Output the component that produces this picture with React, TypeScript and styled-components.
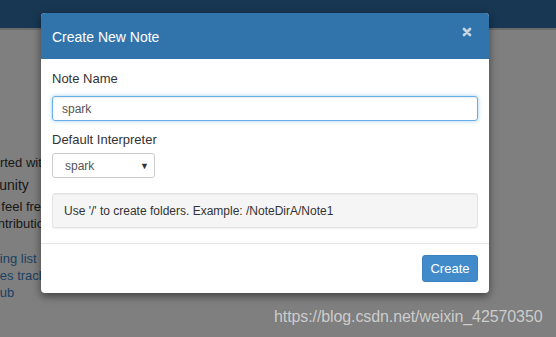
import React from 'react'
import styled, { createGlobalStyle } from 'styled-components'

const GlobalStyle = createGlobalStyle`
  html, body {
    margin: 0;
    padding: 0;
    height: 100%;
  }
  body {
    font-family: 'Liberation Sans', Arial, sans-serif;
    font-size: 13px;
    color: #333;
    background: #fff;
    overflow: hidden;
  }
`

const Page = styled.div`
  position: relative;
  width: 556px;
  height: 337px;
  overflow: hidden;
  background: #fff;
`

const NavBar = styled.div`
  height: 28px;
  background: #306ea6;
  border-bottom: 2px solid #d4d4d4;
`

const Content = styled.div`
  display: flex;
  flex-direction: column;
  margin-left: -42px;
  padding-top: 124px;
  width: 300px;
`

const Line = styled.div<{ gap?: number }>`
  font-size: 13px;
  line-height: 17px;
  color: #333;
  margin-top: ${(p) => p.gap ?? 0}px;
  white-space: nowrap;
`

const Heading = styled.div`
  font-size: 14px;
  line-height: 20px;
  color: #333;
  margin-top: 4px;
`

const LinkList = styled.div`
  display: flex;
  flex-direction: column;
  padding-left: 18px;
  margin-top: 18px;
`

const Link = styled.div`
  font-size: 13px;
  line-height: 17px;
  color: #3d7fc4;
  white-space: nowrap;
`

const Backdrop = styled.div`
  position: absolute;
  inset: 0;
  background: rgba(0, 0, 0, 0.5);
`

const Modal = styled.div`
  position: absolute;
  top: 13px;
  left: 41px;
  width: 448px;
  background: #fff;
  border-radius: 4px;
  overflow: hidden;
  box-shadow: 0 3px 9px rgba(0, 0, 0, 0.5);
`

const Header = styled.div`
  display: flex;
  align-items: center;
  justify-content: space-between;
  height: 46px;
  padding: 0 17px 0 11px;
  background: #3174ab;
`

const Title = styled.h4`
  margin: 0;
  font-size: 14px;
  font-weight: normal;
  color: #fff;
  padding-top: 2px;
`

const Close = styled.span`
  display: flex;
  margin-top: -8px;
  opacity: 0.85;
`

const Body = styled.div`
  padding: 12px 11px 15px 11px;
  border-bottom: 1px solid #e5e5e5;
`

const Label = styled.div<{ space: number }>`
  font-size: 13px;
  line-height: 15px;
  color: #333;
  margin-bottom: ${(p) => p.space}px;
`

const Group = styled.div`
  margin-bottom: 11px;
`

const Input = styled.div`
  box-sizing: border-box;
  height: 25px;
  padding: 0 9px;
  display: flex;
  align-items: center;
  border: 1px solid #66afe9;
  border-radius: 3px;
  box-shadow: inset 0 1px 1px rgba(0, 0, 0, 0.075), 0 0 4px rgba(102, 175, 233, 0.6);
  font-size: 12px;
  color: #555;
`

const Select = styled.div`
  box-sizing: border-box;
  width: 103px;
  height: 25px;
  padding: 0 5px 0 12px;
  display: flex;
  align-items: center;
  justify-content: space-between;
  border: 1px solid #ccc;
  border-radius: 3px;
  font-size: 12px;
  color: #555;
`

const Arrow = styled.span`
  font-size: 9px;
  color: #333;
`

const Well = styled.div`
  box-sizing: border-box;
  height: 35px;
  margin-top: 15px;
  padding: 0 11px;
  display: flex;
  align-items: center;
  background: #f5f5f5;
  border: 1px solid #e3e3e3;
  border-radius: 3px;
  box-shadow: inset 0 1px 1px rgba(0, 0, 0, 0.05), 0 1px 1px rgba(0, 0, 0, 0.06);
  font-size: 12px;
  color: #333;
`

const Footer = styled.div`
  display: flex;
  justify-content: flex-end;
  padding: 11px 11px 11px;
`

const Button = styled.button`
  box-sizing: border-box;
  height: 27px;
  width: 56px;
  padding: 0;
  border: 1px solid #3a82c1;
  border-radius: 3px;
  background: #428bca;
  color: #fff;
  font-family: 'Liberation Sans', Arial, sans-serif;
  font-size: 13px;
`

const Watermark = styled.div`
  position: absolute;
  left: 274px;
  top: 308px;
  font-size: 16px;
  color: rgba(220, 220, 220, 0.85);
  letter-spacing: -0.1px;
`

const CloseIcon = () => (
  <svg width='10' height='10' viewBox='0 0 10 10'>
    <path
      d='M2 2 L8 8 M8 2 L2 8'
      stroke='#dfe6ec'
      strokeWidth='2.8'
      strokeLinecap='round'
    />
  </svg>
)

export default function App() {
  return (
    <Page>
      <GlobalStyle />
      <NavBar />
      <Content>
        <Line>Get started with Zeppelin documentation</Line>
        <Heading>Community</Heading>
        <Line gap={3}>Please feel free to help us to improve Zeppelin,</Line>
        <Line>Any contribution are welcome!</Line>
        <LinkList>
          <Link>Mailing list</Link>
          <Link>Issues tracking</Link>
          <Link>Github</Link>
        </LinkList>
      </Content>
      <Backdrop />
      <Modal>
        <Header>
          <Title>Create New Note</Title>
          <Close>
            <CloseIcon />
          </Close>
        </Header>
        <Body>
          <Group>
            <Label space={10}>Note Name</Label>
            <Input>spark</Input>
          </Group>
          <Label space={6}>Default Interpreter</Label>
          <Select>
            spark
            <Arrow>▼</Arrow>
          </Select>
          <Well>Use '/' to create folders. Example: /NoteDirA/Note1</Well>
        </Body>
        <Footer>
          <Button>Create</Button>
        </Footer>
      </Modal>
      <Watermark>https://blog.csdn.net/weixin_42570350</Watermark>
    </Page>
  )
}
